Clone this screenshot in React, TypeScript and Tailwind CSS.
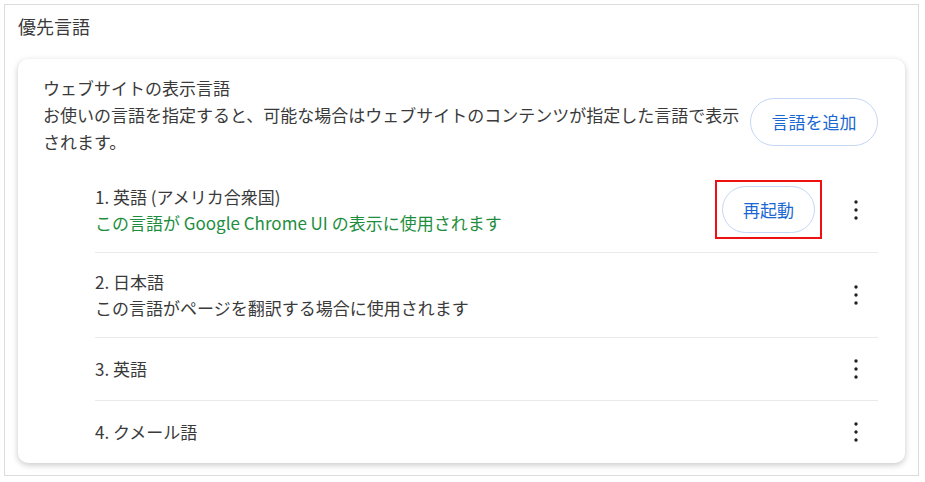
interface LanguageRow {
  label: string;
  note?: string;
  noteGreen?: boolean;
  restart?: boolean;
}

const rows: LanguageRow[] = [
  {
    label: '1. 英語 (アメリカ合衆国)',
    note: 'この言語が Google Chrome UI の表示に使用されます',
    noteGreen: true,
    restart: true,
  },
  { label: '2. 日本語', note: 'この言語がページを翻訳する場合に使用されます' },
  { label: '3. 英語' },
  { label: '4. クメール語' },
];

function Kebab() {
  return (
    <button className="flex h-[44px] w-[44px] items-center justify-center text-[#202124]">
      <svg width="4" height="20" viewBox="0 0 4 20" fill="currentColor">
        <circle cx="2" cy="2" r="1.7" />
        <circle cx="2" cy="10" r="1.7" />
        <circle cx="2" cy="18" r="1.7" />
      </svg>
    </button>
  );
}

export default function App() {
  return (
    <div
      className="h-[482px] w-[925px] bg-white p-[4px] text-[#3a3a3a]"
      style={{ fontFamily: '"Noto Sans CJK JP", "Noto Sans", sans-serif' }}
    >
      <div className="h-[472px] w-[915px] border border-[#dcdcdc] px-[13px] pt-[9px]">
        {/* Header */}
        <h2 className="text-[18px] leading-[24px]">優先言語</h2>

        {/* Card */}
        <div className="mt-[21px] w-[887px] rounded-[10px] bg-white shadow-[0_2px_6px_rgba(0,0,0,0.22)]">
          <div className="flex items-start pl-[25px] pr-[27px] pt-[16px] pb-[12px]">
            <div className="w-[700px] text-[17px] leading-[26px]">
              <p>ウェブサイトの表示言語</p>
              <p className="leading-[27px]">
                お使いの言語を指定すると、可能な場合はウェブサイトのコンテンツが指定した言語で表示されます。
              </p>
            </div>
            <button className="ml-auto mt-[23px] flex h-[48px] w-[128px] items-center justify-center rounded-full border border-[#c4d7f7] text-[17px] text-[#1a67d2]">
              言語を追加
            </button>
          </div>

          {/* Language rows */}
          <div className="ml-[77px] mr-[27px]">
            {rows.map((row, i) => (
              <div
                key={row.label}
                className={`flex items-center ${row.note ? 'h-[85px]' : 'h-[63px]'} ${
                  i > 0 ? 'border-t border-[#e9e9e9]' : ''
                }`}
              >
                <div className="text-[17px] leading-[26px]">
                  <p>{row.label}</p>
                  {row.note && (
                    <p className={row.noteGreen ? 'text-[#1e8e3e]' : ''}>{row.note}</p>
                  )}
                </div>
                <div className="ml-auto flex items-center gap-[12px]">
                  {row.restart && (
                    <div className="border-2 border-[#ee1111] px-[5px] py-[4px]">
                      <button className="flex h-[47px] w-[93px] items-center justify-center rounded-full border border-[#c4d7f7] text-[17px] text-[#1a67d2]">
                        再起動
                      </button>
                    </div>
                  )}
                  <Kebab />
                </div>
              </div>
            ))}
          </div>
        </div>
      </div>
    </div>
  );
}
